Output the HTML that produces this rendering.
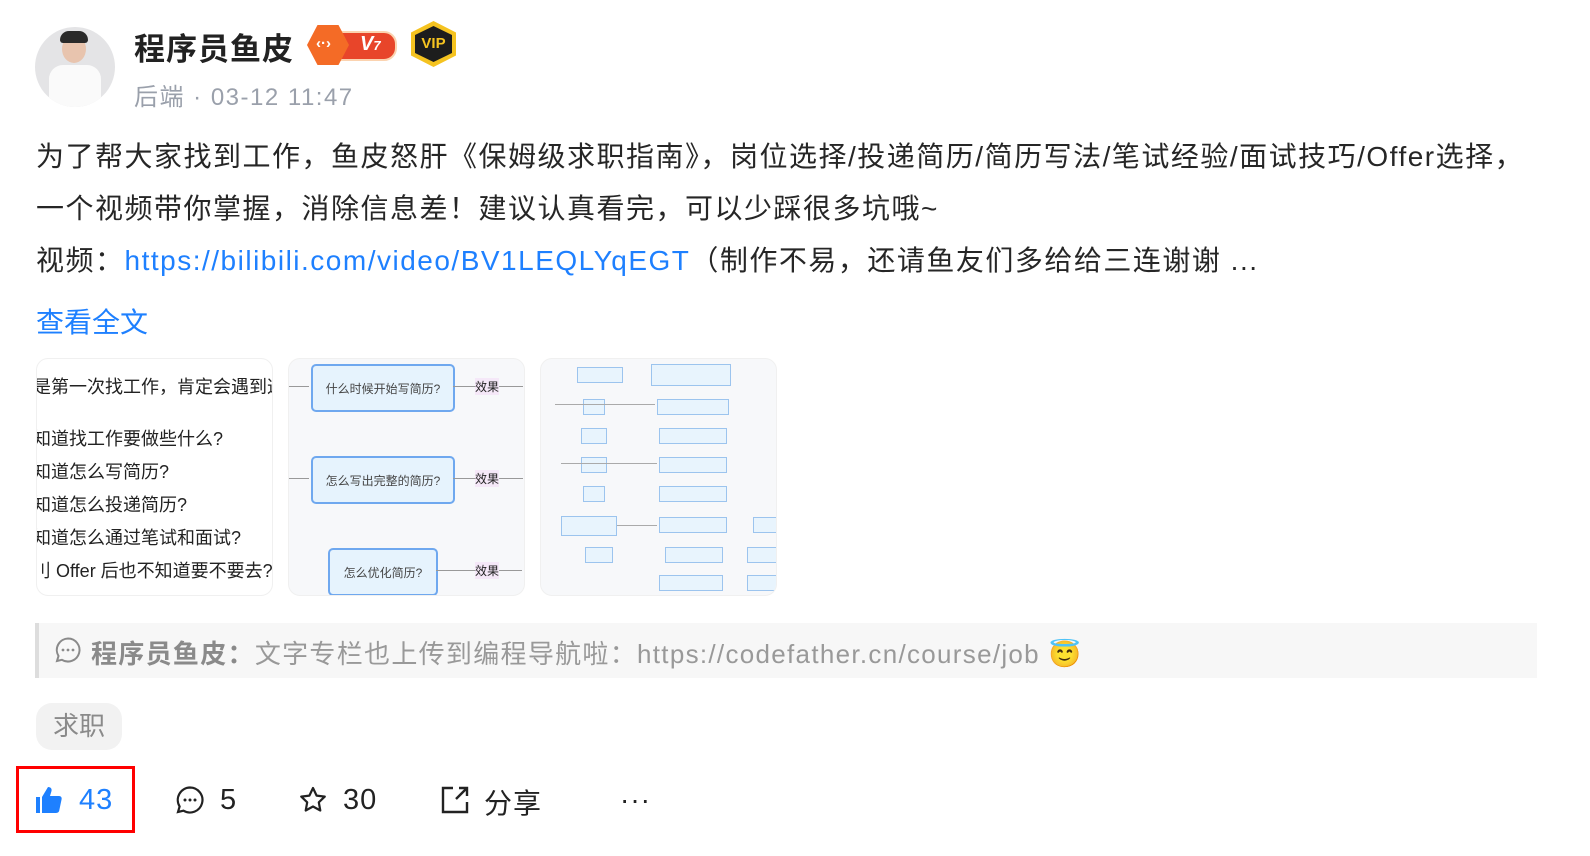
<!DOCTYPE html><html><head><meta charset="utf-8"><style>
body{margin:0;width:1590px;height:856px;background:#fff;font-family:"Liberation Sans","Noto Sans CJK SC",sans-serif;position:relative;overflow:hidden;color:#222}
.a{position:absolute}
.t{font-size:28px;line-height:52px;color:#262626;white-space:nowrap;letter-spacing:1.5px}
.img{position:absolute;top:358px;width:237px;height:238px;border-radius:12px;overflow:hidden;background:#f7f8fa;border:1px solid #f0f0f0;box-sizing:border-box}
.box{position:absolute;border:2px solid #6fa8ef;background:#e6f3fd;border-radius:5px;font-size:12px;color:#444;display:flex;align-items:center;justify-content:center}
.sb{position:absolute;border:1px solid #9cc4ee;background:#e8f4fd;height:14px}
</style></head><body>
<div class="a" style="left:35px;top:27px;width:80px;height:80px;border-radius:50%;background:#e4e4e6;overflow:hidden">
<div class="a" style="left:27px;top:8px;width:24px;height:28px;border-radius:50%;background:#e8c4ae"></div>
<div class="a" style="left:25px;top:4px;width:28px;height:12px;border-radius:12px 12px 4px 4px;background:#2a2a2a"></div>
<div class="a" style="left:14px;top:38px;width:52px;height:50px;border-radius:14px 14px 0 0;background:#fafafa"></div>
</div>
<div class="a" style="left:134px;top:24px;font-size:31px;font-weight:bold;color:#222;letter-spacing:1px">程序员鱼皮</div>
<div class="a" style="left:307px;top:25px;width:90px;height:40px">
<div class="a" style="left:22px;top:6px;width:64px;height:26px;border-radius:13px;background:#e8452a;border:2px solid #fbd3b0"></div>
<div class="a" style="left:0;top:0;width:42px;height:40px;background:#f46b26;clip-path:polygon(25% 0,75% 0,100% 50%,75% 100%,25% 100%,0 50%)"></div>
<div class="a" style="left:9px;top:10px;font-size:15px;color:#fff;font-weight:bold">‹·›</div>
<div class="a" style="left:53px;top:8px;font-size:20px;color:#fff;font-weight:bold;font-style:italic">V<span style="font-size:13px">7</span></div>
</div>
<div class="a" style="left:411px;top:21px;width:45px;height:46px;background:#f5c320;clip-path:polygon(50% 0,100% 25%,100% 75%,50% 100%,0 75%,0 25%)"></div>
<div class="a" style="left:415px;top:26px;width:37px;height:36px;background:#1d1d1d;clip-path:polygon(50% 0,100% 25%,100% 75%,50% 100%,0 75%,0 25%);color:#f5c320;font-size:15px;font-weight:bold;text-align:center;line-height:36px">VIP</div>
<div class="a" style="left:134px;top:77px;font-size:24px;color:#9aa0ab;letter-spacing:1.5px">后端 · 03-12 11:47</div>
<div class="a t" style="left:36px;top:131px">为了帮大家找到工作，鱼皮怒肝《保姆级求职指南》，岗位选择/投递简历/简历写法/笔试经验/面试技巧/Offer选择，</div>
<div class="a t" style="left:36px;top:183px">一个视频带你掌握，消除信息差！建议认真看完，可以少踩很多坑哦~</div>
<div class="a t" style="left:36px;top:235px">视频：<span style="color:#1e80ff">https://bilibili.com/video/BV1LEQLYqEGT</span>（制作不易，还请鱼友们多给给三连谢谢 ...</div>
<div class="a t" style="left:36px;top:297px;color:#1e80ff;letter-spacing:0">查看全文</div>

<div class="img" style="left:36px;background:#fff;font-size:18px;color:#222;line-height:33px">
<div class="a" style="left:-4px;top:12px;white-space:nowrap">是第一次找工作，肯定会遇到这</div>
<div class="a" style="left:-4px;top:64px;white-space:nowrap">知道找工作要做些什么?<br>知道怎么写简历?<br>知道怎么投递简历?<br>知道怎么通过笔试和面试?<br>刂 Offer 后也不知道要不要去?</div>
</div>
<div class="img" style="left:288px">
<div class="box" style="left:22px;top:5px;width:140px;height:44px">什么时候开始写简历?</div>
<div class="box" style="left:22px;top:97px;width:140px;height:44px">怎么写出完整的简历?</div>
<div class="box" style="left:39px;top:189px;width:106px;height:44px">怎么优化简历?</div>
<div class="a" style="left:164px;top:27px;width:70px;border-top:1px solid #999"></div>
<div class="a" style="left:164px;top:119px;width:70px;border-top:1px solid #999"></div>
<div class="a" style="left:147px;top:211px;width:86px;border-top:1px solid #999"></div>
<div class="a" style="left:186px;top:19px;font-size:12px;background:#f5e8f8">效果</div>
<div class="a" style="left:186px;top:111px;font-size:12px;background:#f5e8f8">效果</div>
<div class="a" style="left:186px;top:203px;font-size:12px;background:#f5e8f8">效果</div>
<div class="a" style="left:0;top:27px;width:20px;border-top:1px solid #999"></div>
<div class="a" style="left:0;top:119px;width:20px;border-top:1px solid #999"></div>
</div>
<div class="img" style="left:540px">
<div class="sb" style="left:36px;top:8px;width:44px"></div><div class="sb" style="left:110px;top:5px;width:78px;height:20px"></div>
<div class="sb" style="left:42px;top:40px;width:20px"></div><div class="sb" style="left:116px;top:40px;width:70px"></div>
<div class="sb" style="left:40px;top:69px;width:24px"></div><div class="sb" style="left:118px;top:69px;width:66px"></div>
<div class="sb" style="left:40px;top:98px;width:24px"></div><div class="sb" style="left:118px;top:98px;width:66px"></div>
<div class="sb" style="left:42px;top:127px;width:20px"></div><div class="sb" style="left:118px;top:127px;width:66px"></div>
<div class="sb" style="left:20px;top:157px;width:54px;height:18px"></div><div class="sb" style="left:118px;top:158px;width:66px"></div><div class="sb" style="left:212px;top:158px;width:30px"></div>
<div class="sb" style="left:44px;top:188px;width:26px"></div><div class="sb" style="left:124px;top:188px;width:56px"></div><div class="sb" style="left:206px;top:188px;width:36px"></div>
<div class="sb" style="left:118px;top:216px;width:62px"></div><div class="sb" style="left:206px;top:216px;width:36px"></div>
<div class="a" style="left:14px;top:45px;width:100px;border-top:1px solid #aaa"></div>
<div class="a" style="left:20px;top:104px;width:96px;border-top:1px solid #aaa"></div>
<div class="a" style="left:76px;top:166px;width:40px;border-top:1px solid #aaa"></div>
</div>

<div class="a" style="left:35px;top:623px;width:1502px;height:55px;background:#f7f7f7;border-left:4px solid #ddd;box-sizing:border-box"></div>
<svg class="a" style="left:54px;top:636px" width="28" height="28" viewBox="0 0 28 28"><path d="M14 2.5a11.5 11.5 0 1 1-6 21.3L3 25l1.5-5A11.5 11.5 0 0 1 14 2.5z" fill="none" stroke="#8a8a8a" stroke-width="2"/><circle cx="9" cy="14" r="1.4" fill="#8a8a8a"/><circle cx="14" cy="14" r="1.4" fill="#8a8a8a"/><circle cx="19" cy="14" r="1.4" fill="#8a8a8a"/></svg>
<div class="a" style="left:91px;top:634px;font-size:26px;color:#999;white-space:nowrap;letter-spacing:1.3px"><b style="color:#8a8a8a">程序员鱼皮：</b>文字专栏也上传到编程导航啦：https://codefather.cn/course/job 😇</div>
<div class="a" style="left:36px;top:703px;width:86px;height:47px;border-radius:16px;background:#f2f2f2;font-size:26px;color:#8a8a8a;text-align:center;line-height:47px">求职</div>

<div class="a" style="left:16px;top:766px;width:119px;height:67px;border:3px solid #f00;box-sizing:border-box"></div>
<svg class="a" style="left:34px;top:785px" width="30" height="30" viewBox="0 0 30 30"><rect x="2" y="12" width="4" height="16" fill="#1e80ff"/><path d="M8 12l6-10c3 0 4 2 3.5 4L16 11h9c2 0 3 1.5 2.6 3.3l-2.3 11C25 27 24 28 22 28H8z" fill="#1e80ff"/></svg>
<div class="a" style="left:79px;top:784px;font-size:29px;color:#1e80ff;letter-spacing:1px">43</div>
<svg class="a" style="left:175px;top:785px" width="30" height="30" viewBox="0 0 30 30"><path d="M15 2.5a12.5 12.5 0 1 1-6.5 23.2L3 27l1.6-5.5A12.5 12.5 0 0 1 15 2.5z" fill="none" stroke="#222" stroke-width="2.2"/><circle cx="10" cy="15" r="1.5" fill="#222"/><circle cx="15" cy="15" r="1.5" fill="#222"/><circle cx="20" cy="15" r="1.5" fill="#222"/></svg>
<div class="a" style="left:220px;top:784px;font-size:29px;color:#222">5</div>
<svg class="a" style="left:298px;top:785px" width="30" height="30" viewBox="0 0 30 30"><path d="M15 3l3.6 7.6 8.2 1-6 5.7 1.5 8.2L15 21.5l-7.3 4 1.5-8.2-6-5.7 8.2-1z" fill="none" stroke="#222" stroke-width="2.2" stroke-linejoin="round"/></svg>
<div class="a" style="left:343px;top:784px;font-size:29px;color:#222;letter-spacing:1px">30</div>
<svg class="a" style="left:440px;top:785px" width="30" height="30" viewBox="0 0 30 30"><path d="M13 3H3v24h24V17M19 3h8v8M27 3L16 14" fill="none" stroke="#222" stroke-width="2.4"/></svg>
<div class="a" style="left:484px;top:782px;font-size:28px;color:#222;letter-spacing:1px">分享</div>
<div class="a" style="left:620px;top:784px;font-size:28px;color:#222;letter-spacing:1px">···</div>
</body></html>
